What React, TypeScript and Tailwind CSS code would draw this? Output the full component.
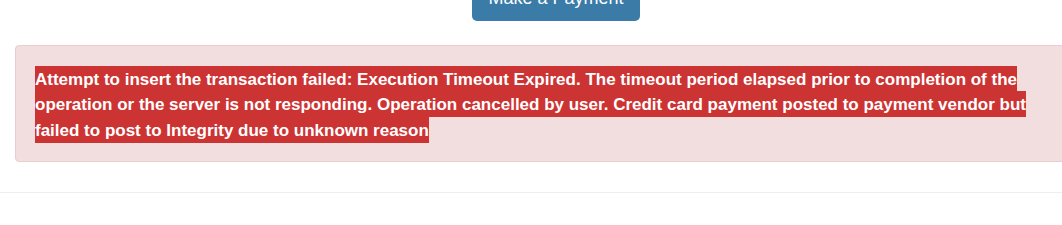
export default function App() {
  return (
    <div className="w-[1062px] h-[225px] overflow-hidden bg-white font-['Liberation_Sans',Arial,sans-serif]">
      {/* Payment button, scrolled partly off the top */}
      <div className="flex justify-center mt-[-25px]">
        <button className="ml-[50px] w-[168px] h-[46px] rounded-[5px] bg-[#3a7ba8] text-white text-[18px] leading-[24px] px-4">
          Make a Payment
        </button>
      </div>

      {/* Error alert */}
      <div className="mt-[24px] ml-[15px] w-[1070px] border border-[#ebccd1] bg-[#f2dede] rounded-[4px] pt-[20px] pb-[18px] px-[19px]">
        <p className="w-[1005px] text-[17px] leading-[25.5px] font-bold text-white">
          <span className="bg-[#cc3333] py-[3.5px] [box-decoration-break:clone]">
            Attempt to insert the transaction failed: Execution Timeout Expired. The timeout period elapsed prior to completion of the operation or the server is not responding. Operation cancelled by user. Credit card payment posted to payment vendor but failed to post to Integrity due to unknown reason
          </span>
        </p>
      </div>

      <hr className="mt-[30px] border-t border-[#eeeeee]" />
    </div>
  );
}
